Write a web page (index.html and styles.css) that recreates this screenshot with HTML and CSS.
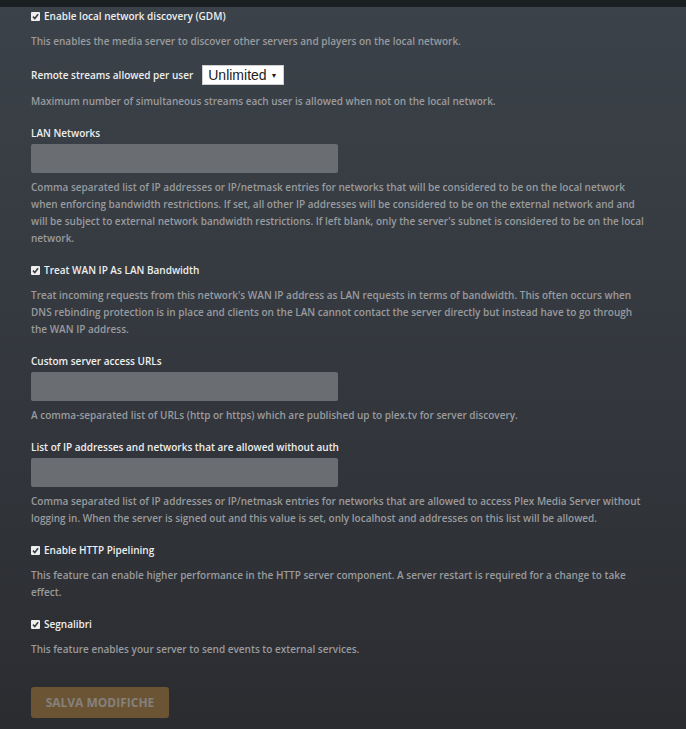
FILE: index.html
```html
<!DOCTYPE html>
<html lang="en">
  <head>
    <meta charset="utf-8">
    <title>Network settings</title>
    <link rel="stylesheet" href="styles.css">
  </head>
  <body>
    <div class="topbar"></div>

    <form class="settings">
      <div class="group">
        <label class="check-label"><span class="check"><svg viewBox="0 0 10 10"><path d="M2.2 5.2 L4.2 7.3 L7.9 2.4" /></svg></span>Enable local network discovery (GDM)</label>
        <p class="help">This enables the media server to discover other servers and players on the local network.</p>
      </div>

      <div class="group">
        <div class="select-row">
          <span class="label">Remote streams allowed per user</span>
          <span class="select">Unlimited<span class="caret">&#9660;</span></span>
        </div>
        <p class="help">Maximum number of simultaneous streams each user is allowed when not on the local network.</p>
      </div>

      <div class="group">
        <span class="label">LAN Networks</span>
        <div class="field"></div>
        <p class="help">Comma separated list of IP addresses or IP/netmask entries for networks that will be considered to be on the local network when enforcing bandwidth restrictions. If set, all other IP addresses will be considered to be on the external network and and will be subject to external network bandwidth restrictions. If left blank, only the server's subnet is considered to be on the local network.</p>
      </div>

      <div class="group">
        <label class="check-label"><span class="check"><svg viewBox="0 0 10 10"><path d="M2.2 5.2 L4.2 7.3 L7.9 2.4" /></svg></span>Treat WAN IP As LAN Bandwidth</label>
        <p class="help">Treat incoming requests from this network's WAN IP address as LAN requests in terms of bandwidth. This often occurs when DNS rebinding protection is in place and clients on the LAN cannot contact the server directly but instead have to go through the WAN IP address.</p>
      </div>

      <div class="group">
        <span class="label">Custom server access URLs</span>
        <div class="field"></div>
        <p class="help">A comma-separated list of URLs (http or https) which are published up to plex.tv for server discovery.</p>
      </div>

      <div class="group">
        <span class="label">List of IP addresses and networks that are allowed without auth</span>
        <div class="field"></div>
        <p class="help">Comma separated list of IP addresses or IP/netmask entries for networks that are allowed to access Plex Media Server without logging in. When the server is signed out and this value is set, only localhost and addresses on this list will be allowed.</p>
      </div>

      <div class="group">
        <label class="check-label"><span class="check"><svg viewBox="0 0 10 10"><path d="M2.2 5.2 L4.2 7.3 L7.9 2.4" /></svg></span>Enable HTTP Pipelining</label>
        <p class="help">This feature can enable higher performance in the HTTP server component. A server restart is required for a change to take effect.</p>
      </div>

      <div class="group">
        <label class="check-label"><span class="check"><svg viewBox="0 0 10 10"><path d="M2.2 5.2 L4.2 7.3 L7.9 2.4" /></svg></span>Segnalibri</label>
        <p class="help">This feature enables your server to send events to external services.</p>
      </div>

      <button type="button" class="btn-save" disabled>Salva modifiche</button>
    </form>
  </body>
</html>
```

FILE: styles.css
```css
html {
  background: #2b2c30;
}
body {
  margin: 0;
  min-height: 729px;
  background: linear-gradient(to bottom, #3b4249 0%, #34383e 50%, #2b2c30 100%);
  font-family: "Open Sans", "Liberation Sans", sans-serif;
  font-size: 10px;
  line-height: 17px;
}
.topbar {
  height: 7px;
  background-color: #1c1f22;
}
.settings {
  width: 614px;
  padding: 1px 0 0 31px;
}
.group {
  margin-bottom: 15px;
}
.label,
.check-label {
  display: block;
  color: #eeeeee;
  font-weight: 600;
}
.check-label {
  display: flex;
  align-items: center;
  margin-bottom: 8px;
}
.check {
  display: inline-flex;
  width: 9px;
  height: 9px;
  margin-right: 4px;
  background-color: #eeeeee;
  border-radius: 1px;
}
.check svg {
  width: 9px;
  height: 9px;
  fill: none;
  stroke: #3c3f44;
  stroke-width: 1.8;
}
.select-row {
  display: flex;
  align-items: center;
  height: 20px;
  margin-top: 1px;
  margin-bottom: 8px;
}
.select-row .label {
  margin-right: 9px;
}
.select {
  display: inline-flex;
  align-items: center;
  height: 20px;
  padding: 0 5px;
  background-color: #ffffff;
  border: 1px solid #cfcfcf;
  box-sizing: border-box;
  color: #222222;
  font-family: "Liberation Sans", Arial, sans-serif;
  font-size: 14px;
  font-weight: 400;
}
.caret {
  margin-left: 4px;
  font-size: 7px;
}
.field {
  width: 307px;
  height: 29px;
  margin: 2px 0 6px;
  background-color: #6a6d72;
  border-radius: 2px;
}
.help {
  margin: 0;
  color: #999b9e;
  font-weight: 600;
}
.btn-save {
  margin-top: 14px;
  width: 138px;
  height: 31px;
  padding: 0;
  border: none;
  border-radius: 3px;
  background-color: #6b5434;
  color: #85817c;
  font-family: "Open Sans", "Liberation Sans", sans-serif;
  font-size: 12px;
  font-weight: 700;
  text-transform: uppercase;
}
```
